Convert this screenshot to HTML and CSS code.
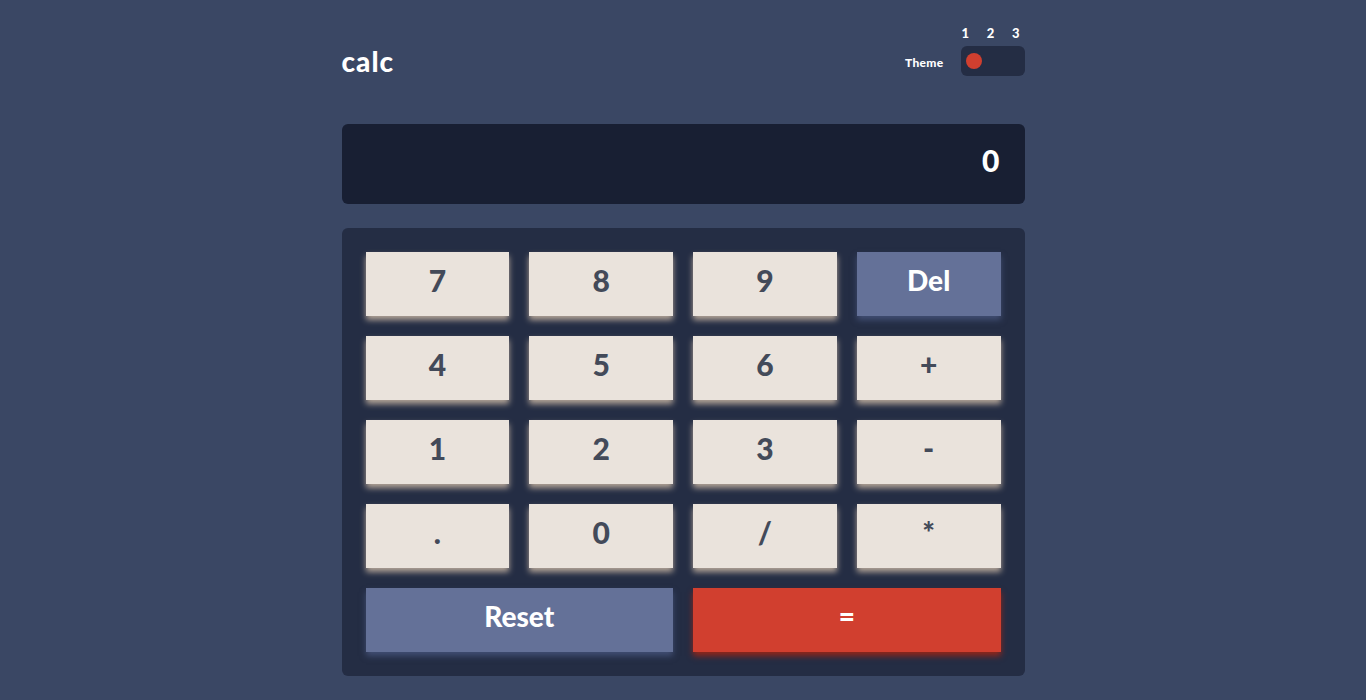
FILE: index.html
```html
<!DOCTYPE html>
<html lang="en">
<head>
<meta charset="utf-8">
<title>calc</title>
<link rel="stylesheet" href="styles.css">
</head>
<body>
<main class="calc">
  <header class="header">
    <h1 class="logo">calc</h1>
    <div class="theme">
      <span class="theme-label">Theme</span>
      <div class="theme-switch">
        <div class="theme-nums"><span>1</span><span>2</span><span>3</span></div>
        <div class="toggle"><span class="dot"></span></div>
      </div>
    </div>
  </header>
  <section class="screen">0</section>
  <section class="keypad">
    <button class="key">7</button>
    <button class="key">8</button>
    <button class="key">9</button>
    <button class="key key-blue">Del</button>
    <button class="key">4</button>
    <button class="key">5</button>
    <button class="key">6</button>
    <button class="key">+</button>
    <button class="key">1</button>
    <button class="key">2</button>
    <button class="key">3</button>
    <button class="key">-</button>
    <button class="key">.</button>
    <button class="key">0</button>
    <button class="key">/</button>
    <button class="key">*</button>
    <button class="key key-blue key-wide">Reset</button>
    <button class="key key-red key-wide">=</button>
  </section>
</main>
</body>
</html>
```
FILE: styles.css
```css
* { box-sizing: border-box; }
html, body { margin: 0; padding: 0; }
body {
  background: #3a4764;
  font-family: "Lato", "Open Sans", sans-serif;
  font-weight: 700;
  color: #ffffff;
  min-height: 700px;
}
.calc {
  width: 683px;
  margin: 0 auto;
  padding-top: 26px;
}
.header {
  display: flex;
  justify-content: space-between;
  align-items: flex-end;
  height: 50px;
}
.logo {
  margin: 0 0 -1px 0;
  font-size: 28px;
  font-weight: 900;
  line-height: 32px;
  letter-spacing: 1px;
}
.theme {
  display: flex;
  align-items: flex-end;
  gap: 17px;
}
.theme-label {
  font-size: 12px;
  font-weight: 900;
  line-height: 30px;
  letter-spacing: 0.3px;
  margin-bottom: -2px;
}
.theme-switch {
  display: flex;
  flex-direction: column;
  width: 64px;
  gap: 6px;
}
.theme-nums {
  display: flex;
  justify-content: space-between;
  padding: 0 5px 0 1px;
  font-size: 13px;
  font-weight: 900;
  line-height: 13px;
}
.toggle {
  height: 30px;
  background: #242d44;
  border-radius: 6px;
  padding: 7px 5px;
  display: flex;
}
.dot {
  width: 16px;
  height: 16px;
  border-radius: 50%;
  background: #d03f2f;
}
.screen {
  margin-top: 48px;
  height: 80px;
  background: #181f33;
  border-radius: 6px;
  padding: 0 25px 8px 25px;
  display: flex;
  align-items: center;
  justify-content: flex-end;
  font-size: 30px;
  font-weight: 900;
}
.keypad {
  margin-top: 24px;
  background: #242d44;
  border-radius: 6px;
  padding: 24px;
  display: grid;
  grid-template-columns: repeat(4, 1fr);
  grid-auto-rows: 64px;
  gap: 20px;
}
.key {
  border: 0;
  border-radius: 0;
  background: #eae3dc;
  color: #434a59;
  font-family: inherit;
  font-weight: 900;
  font-size: 30px;
  padding: 0 0 8px 0;
  box-shadow: 0 4px 6px #b3a497;
  cursor: pointer;
}
.key-blue {
  background: #647198;
  color: #ffffff;
  font-size: 28px;
  box-shadow: 0 4px 6px #414e73;
}
.key-red {
  background: #d13f2f;
  color: #ffffff;
  font-size: 28px;
  box-shadow: 0 4px 6px #93261a;
}
.key-wide {
  grid-column: span 2;
}
```
